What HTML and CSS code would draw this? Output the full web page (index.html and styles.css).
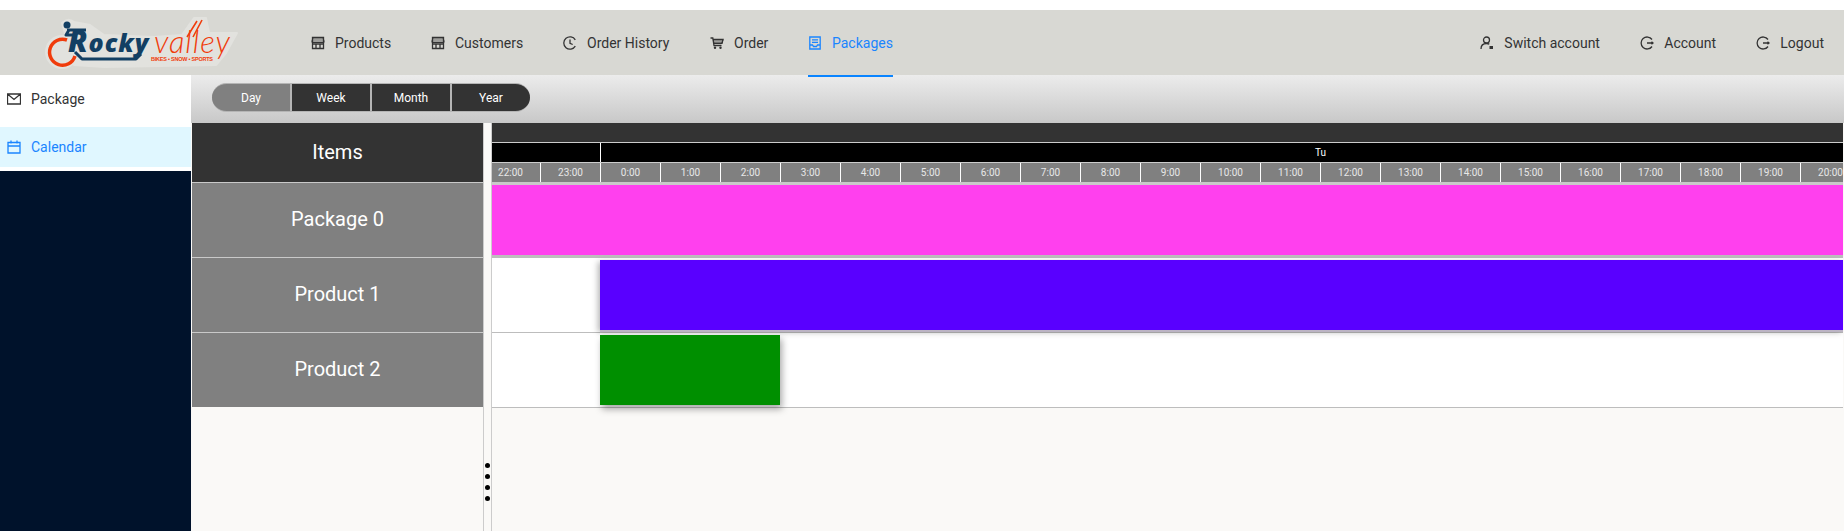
FILE: index.html
```html
<!DOCTYPE html>
<html lang="en">
<head>
    <meta charset="UTF-8">
    <meta name="viewport" content="width=device-width, initial-scale=1.0">
    <title>Packages</title>
    <link rel="stylesheet" href="styles.css">
</head>
<body>

<header class="topbar">
    <div class="logo">
        <svg width="200" height="56" viewBox="0 0 200 56">
            <g class="logo-halo">
                <circle cx="18" cy="37" r="16"/>
                <path d="M18 8 Q24 2 30 7 L46 10 L60 20 L110 22 L138 20 L150 3 L162 3 L165 18 L193 18 L182 38 L172 50 L60 52 L30 50 Z"/>
            </g>
            <path class="logo-wheel" d="M23 25 A13 13 0 1 0 31 41"/>
            <circle class="logo-head" cx="23" cy="10" r="3.5"/>
            <path class="logo-body" d="M23 15 H42 M25 15 L22 20 H29 M31 37 L38 44 H92 L97 39"/>
            <text class="logo-rocky" x="24" y="37"><tspan class="logo-cap">R</tspan>ocky</text>
            <text class="logo-valley" x="110" y="38" textLength="76" lengthAdjust="spacing">valley</text>
            <path class="logo-swash" d="M143 22 L153 6 M149 22 L158 5"/>
            <text class="logo-tag" x="107" y="46" textLength="62" lengthAdjust="spacing">BIKES • SNOW • SPORTS</text>
        </svg>
    </div>
    <nav class="main-nav">
        <a class="nav-item item-products" href="#">
            <svg class="icon" viewBox="0 0 14 14"><path d="M1.500 1.500h11v11h-11zM1.500 8h11M5 8v4.500M9 8v4.500"/><path class="icon-shade" d="M2 1.500h10l1 3.500v1.500H1V5z"/></svg>
            Products
        </a>
        <a class="nav-item item-customers" href="#">
            <svg class="icon" viewBox="0 0 14 14"><path d="M1.500 1.500h11v11h-11zM1.500 8h11M5 8v4.500M9 8v4.500"/><path class="icon-shade" d="M2 1.500h10l1 3.500v1.500H1V5z"/></svg>
            Customers
        </a>
        <a class="nav-item item-history" href="#">
            <svg class="icon" viewBox="0 0 14 14"><path d="M12.300 3.800A6.200 6.200 0 1 0 12.300 10.200M7 3.500v3.800l2.700 1.200"/></svg>
            Order History
        </a>
        <a class="nav-item item-order" href="#">
            <svg class="icon" viewBox="0 0 14 14"><path d="M.5 2h2.300l1.200 7.500h7.500M3.200 3.500h9.800l-1 3.800H3.700"/><path class="icon-shade" d="M3.300 3.500h9.700l-1 3.800H3.800z"/><circle class="icon-fill" cx="5" cy="11.800" r="1.200"/><circle class="icon-fill" cx="10.500" cy="11.800" r="1.200"/></svg>
            Order
        </a>
        <a class="nav-item item-packages active" href="#">
            <svg class="icon" viewBox="0 0 14 14"><path d="M1.800 1h10.400v12H1.800zM4 3.800h6M4 6.300h6M1.800 9H4.500l1 1.500h3l1-1.500h2.700"/></svg>
            Packages
        </a>
    </nav>
    <nav class="user-nav">
        <a class="nav-item item-switch" href="#">
            <svg class="icon" viewBox="0 0 14 14"><circle cx="6.500" cy="4" r="3"/><path d="M1 13c0-3.500 2-5.500 5.500-5.500 1 0 2 .2 2.800.6"/><path class="icon-fill" d="M9.500 10h3.500v3H9.500z"/></svg>
            Switch account
        </a>
        <a class="nav-item item-account" href="#">
            <svg class="icon" viewBox="0 0 14 14"><path d="M12 3.500A6 6 0 1 0 12 10.500M7 7h6M11.500 5.800L13 7l-1.500 1.200"/></svg>
            Account
        </a>
        <a class="nav-item item-logout" href="#">
            <svg class="icon" viewBox="0 0 14 14"><path d="M12 3.500A6 6 0 1 0 12 10.500M7 7h6M11.500 5.800L13 7l-1.500 1.200"/></svg>
            Logout
        </a>
    </nav>
</header>

<div class="page">
    <aside class="sidebar">
        <a class="side-item side-package" href="#">
            <svg class="icon" viewBox="0 0 14 14"><path d="M.5 2h13v10H.5zM.5 2L7 7.500 13.500 2"/></svg>
            Package
        </a>
        <a class="side-item side-calendar active" href="#">
            <svg class="icon" viewBox="0 0 14 14"><path d="M1 2.500h12v10.500H1zM1 6h12M4 .5v3M10 .5v3"/></svg>
            Calendar
        </a>
        <div class="side-fill"></div>
    </aside>

    <main class="content">
        <div class="toolbar">
            <div class="range-pill">
                <button class="range-btn selected" type="button">Day</button>
                <button class="range-btn" type="button">Week</button>
                <button class="range-btn" type="button">Month</button>
                <button class="range-btn" type="button">Year</button>
            </div>
        </div>

        <div class="gantt">
            <div class="items">
                <div class="items-head">Items</div>
                <div class="items-row">Package 0</div>
                <div class="items-row">Product 1</div>
                <div class="items-row">Product 2</div>
            </div>

            <div class="splitter">
                <span class="dot"></span>
                <span class="dot"></span>
                <span class="dot"></span>
                <span class="dot"></span>
            </div>

            <div class="timeline">
                <div class="tl-top"></div>
                <div class="tl-days">
                    <div class="day day-prev"></div>
                    <div class="day day-tu">Tu</div>
                </div>
                <div class="tl-hours">
                    <div class="hour first">22:00</div>
                    <div class="hour">23:00</div>
                    <div class="hour">0:00</div>
                    <div class="hour">1:00</div>
                    <div class="hour">2:00</div>
                    <div class="hour">3:00</div>
                    <div class="hour">4:00</div>
                    <div class="hour">5:00</div>
                    <div class="hour">6:00</div>
                    <div class="hour">7:00</div>
                    <div class="hour">8:00</div>
                    <div class="hour">9:00</div>
                    <div class="hour">10:00</div>
                    <div class="hour">11:00</div>
                    <div class="hour">12:00</div>
                    <div class="hour">13:00</div>
                    <div class="hour">14:00</div>
                    <div class="hour">15:00</div>
                    <div class="hour">16:00</div>
                    <div class="hour">17:00</div>
                    <div class="hour">18:00</div>
                    <div class="hour">19:00</div>
                    <div class="hour">20:00</div>
                </div>
                <div class="tl-row row-pink"><div class="bar bar-pink"></div></div>
                <div class="tl-row row-purple"><div class="bar bar-purple"></div></div>
                <div class="tl-row row-green"><div class="bar bar-green"></div></div>
            </div>
        </div>
    </main>
</div>

</body>
</html>
```

FILE: styles.css
```css
* {
    box-sizing: border-box;
}

html, body {
    height: 100%;
    overflow: hidden;
}

body {
    display: flex;
    flex-direction: column;
    margin: 0;
    padding-top: 10px;
    background-color: #fff;
    color: #333;
    font-family: Roboto, sans-serif;
    font-size: 14px;
}

a {
    color: inherit;
    text-decoration: none;
}

.icon {
    display: block;
    flex: none;
    width: 14px;
    height: 14px;
    fill: none;
    stroke: currentColor;
    stroke-width: 1.3;
}

.icon-fill {
    fill: currentColor;
    stroke: none;
}

.icon-shade {
    fill: currentColor;
    fill-opacity: 0.35;
    stroke-width: 1;
}

/* top bar */
.topbar {
    display: flex;
    flex: none;
    position: relative;
    z-index: 2;
    height: 65px;
    background-color: #d8d8d3;
}

.logo {
    flex: none;
    width: 311px;
    padding: 5px 0 0 44px;
}

.logo-halo {
    fill: #e2e2de;
    stroke: #e2e2de;
    stroke-linejoin: round;
    stroke-width: 2;
}

.logo-wheel {
    fill: none;
    stroke: #f03c0c;
    stroke-width: 3.5;
}

.logo-head {
    fill: #123f63;
}

.logo-body {
    fill: none;
    stroke: #123f63;
    stroke-linejoin: round;
    stroke-width: 3;
}

.logo-rocky {
    fill: #123f63;
    font-family: "Open Sans", sans-serif;
    font-size: 25px;
    font-style: italic;
    font-weight: 800;
    letter-spacing: 1px;
}

.logo-cap {
    font-size: 30px;
}

.logo-valley {
    fill: #f03c0c;
    font-family: Lato, sans-serif;
    font-size: 31px;
    font-style: italic;
    font-weight: 300;
}

.logo-swash {
    fill: none;
    stroke: #f03c0c;
    stroke-width: 1.6;
}

.logo-tag {
    fill: #f03c0c;
    font-family: "Liberation Sans", sans-serif;
    font-size: 5.5px;
    font-weight: 700;
}

.main-nav, .user-nav {
    display: flex;
    align-items: stretch;
}

.user-nav {
    margin-left: auto;
    padding-right: 20px;
}

.nav-item {
    display: flex;
    align-items: center;
    gap: 10px;
    margin-bottom: -2px;
    border-bottom: 2px solid transparent;
    color: #333;
}

.item-products {
    width: 120px;
}

.item-customers {
    width: 132px;
}

.item-history {
    width: 147px;
}

.item-order {
    width: 98px;
}

.item-packages {
    width: 85px;
}

.item-switch {
    width: 160px;
}

.item-account {
    width: 116px;
}

.nav-item.active {
    border-bottom-color: #0a84ff;
    color: #1a85ff;
}

/* page */
.page {
    display: flex;
    flex: 1;
    min-height: 0;
}

.sidebar {
    display: flex;
    flex: none;
    flex-direction: column;
    width: 191px;
    background-color: #fff;
}

.side-item {
    display: flex;
    align-items: center;
    gap: 10px;
    padding-left: 7px;
    color: #333;
}

.side-package {
    height: 52px;
    padding-bottom: 4px;
}

.side-calendar {
    height: 40px;
    margin-bottom: 4px;
}

.side-item.active {
    background-color: #e0f7ff;
    color: #1a85ff;
}

.side-fill {
    flex: 1;
    background-color: #00122b;
}

.content {
    display: flex;
    flex: 1;
    flex-direction: column;
    min-width: 0;
    background-color: #faf9f7;
}

.toolbar {
    flex: none;
    height: 48px;
    padding: 8px 0 0 21px;
    background: linear-gradient(#ececec, #c8c8c8);
}

.range-pill {
    display: inline-flex;
    gap: 2px;
    height: 29px;
    overflow: hidden;
    border-top: 1px solid #b5b5b5;
    border-bottom: 1px solid #b5b5b5;
    border-radius: 15px;
    background-color: #b5b5b5;
}

.range-btn {
    width: 78px;
    padding: 0;
    border: none;
    background-color: #333;
    color: #fff;
    font-family: Roboto, sans-serif;
    font-size: 12px;
}

.range-btn.selected {
    background-color: #808080;
}

.gantt {
    display: flex;
    flex: 1;
    min-height: 0;
    padding-left: 1px;
}

.items {
    flex: none;
    width: 291px;
    color: #fff;
    text-align: center;
}

.items-head {
    display: flex;
    align-items: center;
    justify-content: center;
    height: 59px;
    padding-bottom: 2px;
    background-color: #333;
    font-size: 20px;
}

.items-row {
    display: flex;
    align-items: center;
    justify-content: center;
    height: 75px;
    padding-bottom: 2px;
    border-top: 1px solid #c9c9c9;
    background-color: #808080;
    font-size: 20px;
}

.splitter {
    display: flex;
    flex: none;
    flex-direction: column;
    align-items: center;
    justify-content: flex-end;
    gap: 6px;
    width: 9px;
    padding-bottom: 30px;
    border-right: 1px solid #ccc;
    border-left: 1px solid #ccc;
}

.dot {
    flex: none;
    width: 5px;
    height: 5px;
    border-radius: 50%;
    background-color: #000;
}

.timeline {
    flex: 1;
    min-width: 0;
    margin-right: 1px;
    overflow: hidden;
    color: #fff;
}

.tl-top {
    height: 19px;
    background-color: #333;
}

.tl-days {
    display: flex;
    width: 1548px;
    height: 21px;
    border-top: 1px solid #ccc;
    border-bottom: 1px solid #ccc;
    background-color: #000;
    font-size: 10px;
}

.day {
    display: flex;
    align-items: center;
    justify-content: center;
}

.day-prev {
    flex: none;
    width: 108px;
}

.day-tu {
    flex: none;
    width: 1440px;
    border-left: 1px solid #fff;
}

.tl-hours {
    display: flex;
    height: 19px;
    font-size: 10px;
}

.hour {
    display: flex;
    flex: none;
    align-items: center;
    justify-content: center;
    width: 60px;
    border-left: 1px solid #fff;
    background-color: #808080;
    color: #e8e8e8;
}

.hour.first {
    margin-left: -12px;
}

.tl-row {
    display: flex;
    height: 75px;
    padding-top: 2px;
    border-bottom: 1px solid #bdbdbd;
    background-color: #fff;
}

.row-pink {
    height: 76px;
    padding-top: 0;
    border-top: 3px solid #c9c9c9;
    border-bottom-width: 3px;
}

.bar {
    height: 70px;
}

.bar-pink {
    width: 100%;
    background-color: #ff40ee;
}

.bar-purple {
    flex: 1;
    margin-left: 108px;
    background-color: #5900ff;
    box-shadow: 0 2px 0 #bcb4c4, -2px 2px 6px rgba(0, 0, 0, 0.3);
}

.bar-green {
    flex: none;
    width: 180px;
    margin-left: 108px;
    background-color: #008f00;
    box-shadow: 2px 4px 7px rgba(0, 0, 0, 0.35);
}
```
